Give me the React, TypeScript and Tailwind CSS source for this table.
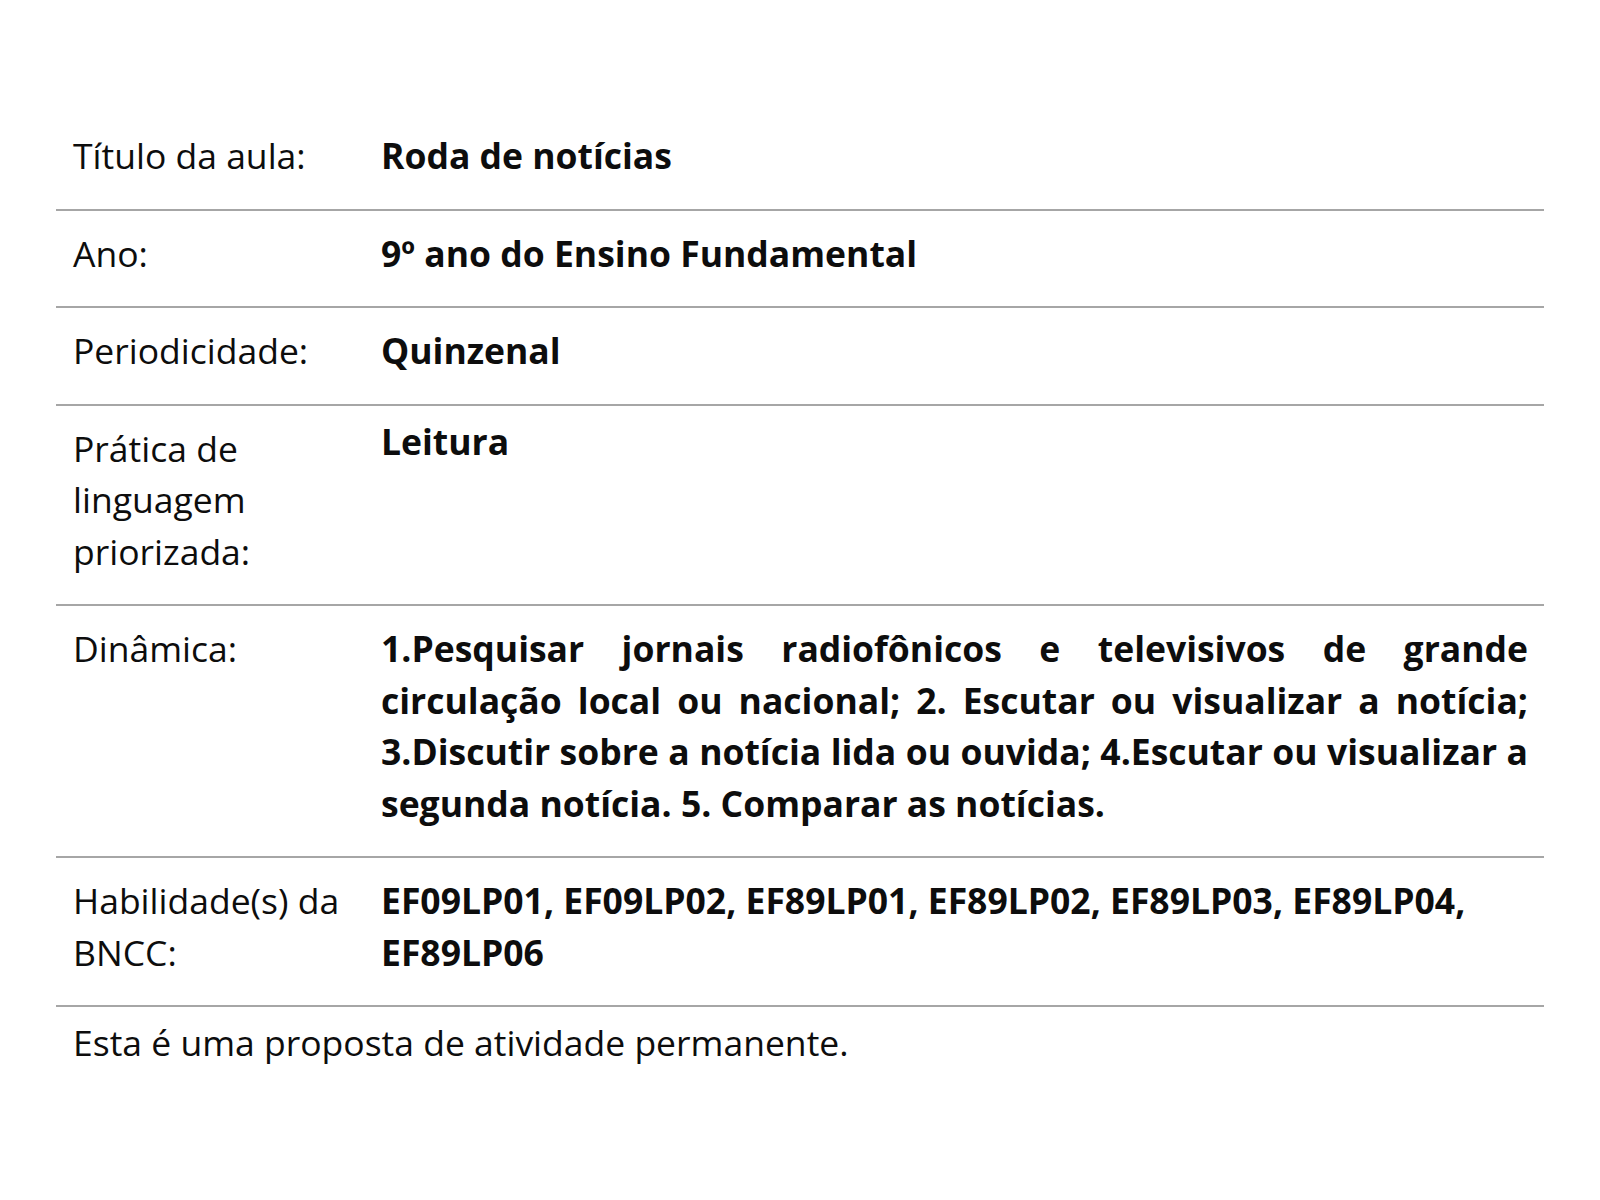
const rows: { label: string; value: string; justify?: boolean; raise?: boolean }[] = [
  { label: 'Título da aula:', value: 'Roda de notícias' },
  { label: 'Ano:', value: '9º ano do Ensino Fundamental' },
  { label: 'Periodicidade:', value: 'Quinzenal' },
  { label: 'Prática de linguagem priorizada:', value: 'Leitura', raise: true },
  {
    label: 'Dinâmica:',
    value:
      '1.Pesquisar jornais radiofônicos e televisivos de grande circulação local ou nacional; 2. Escutar ou visualizar a notícia; 3.Discutir sobre a notícia lida ou ouvida; 4.Escutar ou visualizar a segunda notícia. 5. Comparar as notícias.',
    justify: true,
  },
  { label: 'Habilidade(s) da BNCC:', value: 'EF09LP01, EF09LP02, EF89LP01, EF89LP02, EF89LP03, EF89LP04, EF89LP06' },
]

export default function App() {
  return (
    <div
      className="min-h-[1200px] w-[1600px] bg-white text-[#0d0d0d] pt-[111px] px-[56px]"
      style={{ fontFamily: '"Open Sans", "Noto Sans", sans-serif' }}
    >
      <div className="flex flex-col">
        {rows.map((r, i) => (
          <div
            key={r.label}
            className={`grid grid-cols-[325px_1fr] border-b-2 border-[#a6a6a6] pb-[27px] text-[35.5px] leading-[51.5px] ${i === 0 ? 'pt-[19px]' : 'pt-[17px]'}`}
          >
            <div className="pl-[17px] pr-[30px]">{r.label}</div>
            <div className={`font-bold pr-[16px] ${r.justify ? 'text-justify' : ''} ${r.raise ? 'mt-[-7px]' : ''}`}>
              {r.value}
            </div>
          </div>
        ))}
        <p className="pl-[17px] pt-[10px] text-[35.5px] leading-[51.5px]">Esta é uma proposta de atividade permanente.</p>
      </div>
    </div>
  )
}
